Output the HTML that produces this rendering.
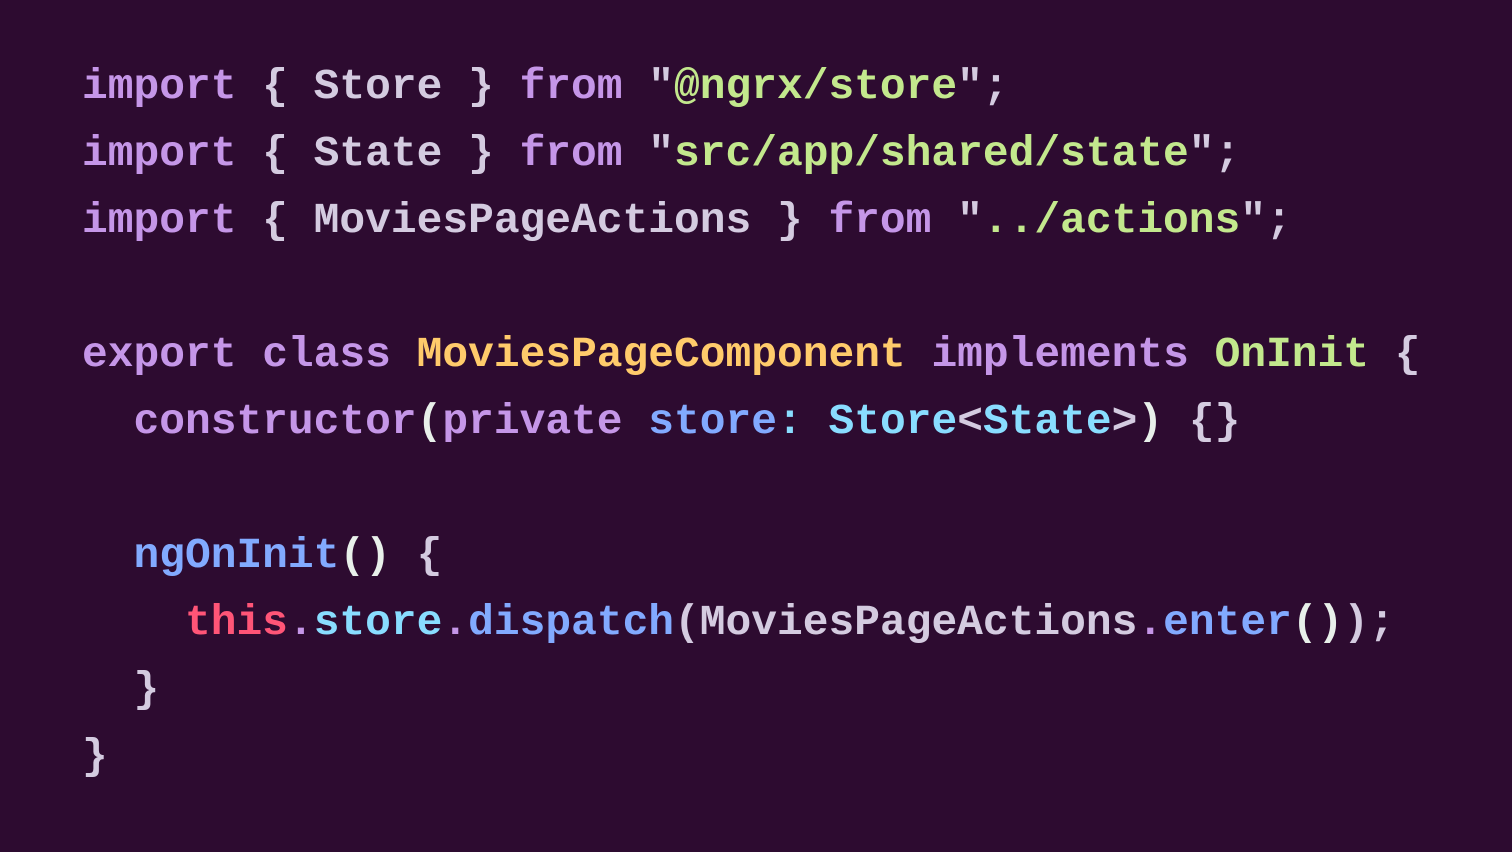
<!DOCTYPE html>
<html><head><meta charset="utf-8"><style>
html,body{margin:0;padding:0;background:#2d0b30;width:1512px;height:852px;overflow:hidden}
pre{margin:0;position:absolute;left:82px;top:53px;font-family:"Liberation Mono",monospace;font-weight:bold;font-size:42.9px;line-height:67px;color:#d4cbe0;letter-spacing:0px}
.k{color:#c596e8}.s{color:#c3e88d}.y{color:#ffcb6b}.t{color:#ff5577}.c{color:#89ddff}.b{color:#82aaff}.p{color:#c596e8}.w{color:#e8f0ea}.g{color:#c3e88d}
</style></head><body><pre><span class="k">import</span> { Store } <span class="k">from</span> "<span class="s">@ngrx/store</span>";
<span class="k">import</span> { State } <span class="k">from</span> "<span class="s">src/app/shared/state</span>";
<span class="k">import</span> { MoviesPageActions } <span class="k">from</span> "<span class="s">../actions</span>";

<span class="k">export</span> <span class="k">class</span> <span class="y">MoviesPageComponent</span> <span class="k">implements</span> <span class="g">OnInit</span> {
  <span class="k">constructor</span><span class="w">(</span><span class="k">private</span> <span class="b">store</span><span class="c">:</span> <span class="c">Store</span>&lt;<span class="c">State</span>&gt;<span class="w">)</span> {}

  <span class="b">ngOnInit</span><span class="w">()</span> {
    <span class="t">this</span><span class="p">.</span><span class="c">store</span><span class="p">.</span><span class="b">dispatch</span>(MoviesPageActions<span class="p">.</span><span class="b">enter</span><span class="w">()</span>);
  }
}</pre></body></html>
